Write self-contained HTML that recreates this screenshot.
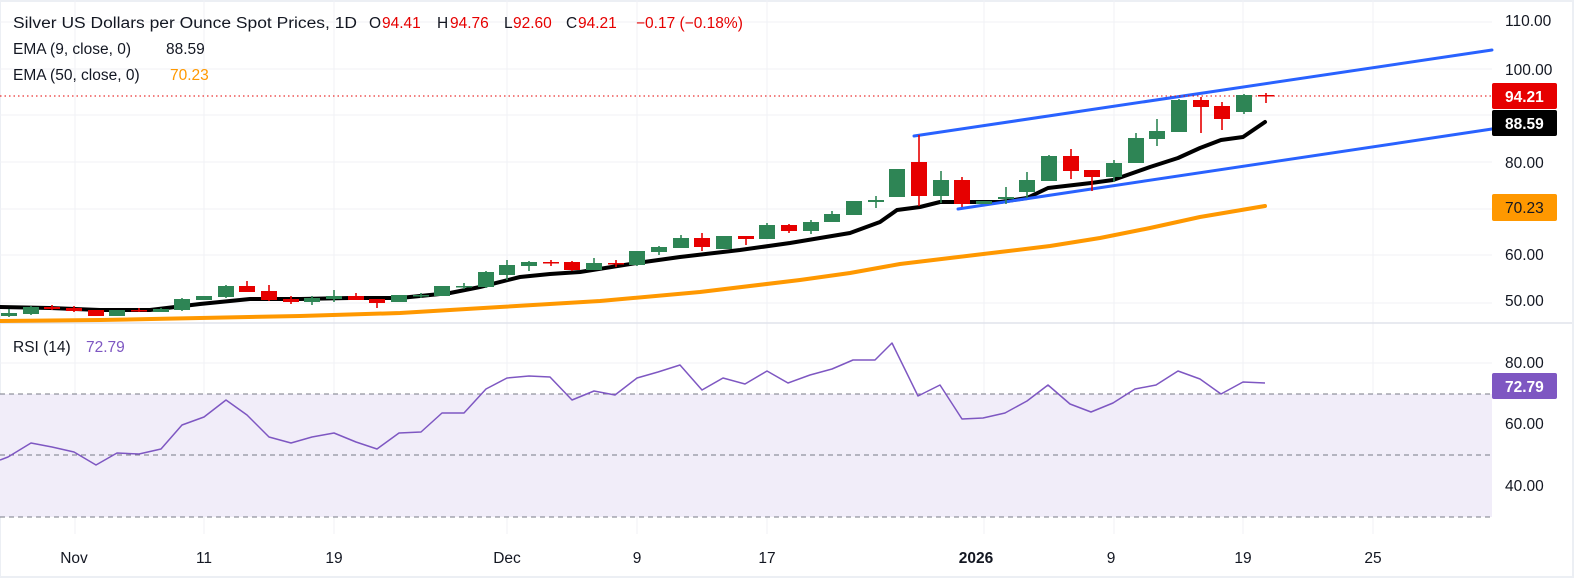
<!DOCTYPE html>
<html><head><meta charset="utf-8"><style>
html,body{margin:0;padding:0;background:#eceff4;}
svg{display:block;font-family:"Liberation Sans",sans-serif;}
</style></head><body>
<svg width="1574" height="578" viewBox="0 0 1574 578" xmlns="http://www.w3.org/2000/svg">
<rect x="1" y="2" width="1571" height="574" fill="#fff"/>
<!-- grid -->
<g stroke="#f0f2f6" stroke-width="1">
<line x1="0" y1="22" x2="1492" y2="22"/><line x1="0" y1="69" x2="1492" y2="69"/><line x1="0" y1="115" x2="1492" y2="115"/>
<line x1="0" y1="162" x2="1492" y2="162"/><line x1="0" y1="209" x2="1492" y2="209"/><line x1="0" y1="255" x2="1492" y2="255"/>
<line x1="0" y1="303" x2="1492" y2="303"/>
<line x1="0" y1="363" x2="1492" y2="363"/><line x1="0" y1="425" x2="1492" y2="425"/><line x1="0" y1="486" x2="1492" y2="486"/>
<line x1="75" y1="0" x2="75" y2="534"/><line x1="204" y1="0" x2="204" y2="534"/><line x1="334" y1="0" x2="334" y2="534"/>
<line x1="507" y1="0" x2="507" y2="534"/><line x1="637" y1="0" x2="637" y2="534"/><line x1="767" y1="0" x2="767" y2="534"/>
<line x1="984" y1="0" x2="984" y2="534"/><line x1="1114" y1="0" x2="1114" y2="534"/><line x1="1243" y1="0" x2="1243" y2="534"/>
<line x1="1373" y1="0" x2="1373" y2="534"/>
</g>
<line x1="0" y1="323" x2="1572" y2="323" stroke="#e0e3eb" stroke-width="1.5"/>
<!-- RSI band -->
<rect x="0" y="394" width="1492" height="123" fill="#f1edf9"/>
<g stroke="#787b86" stroke-width="1" stroke-dasharray="5,4">
<line x1="0" y1="394" x2="1492" y2="394"/><line x1="0" y1="455" x2="1492" y2="455"/><line x1="0" y1="517" x2="1492" y2="517"/>
</g>
<!-- EMA50 -->
<polyline fill="none" stroke="#ff9800" stroke-width="4" stroke-linejoin="round" stroke-linecap="round"
points="0,321 100,320 200,318 300,316 400,313 450,310 500,307 600,301 700,292 800,280 850,273 900,264 950,258 1000,252 1050,246 1100,238 1150,228 1200,217 1265,206"/>
<!-- EMA9 -->
<polyline fill="none" stroke="#000" stroke-width="4" stroke-linejoin="round" stroke-linecap="round"
points="0,307 50,308 100,310 150,310 200,304 250,299 300,299 350,298 400,298 450,293 480,287 520,277 550,274 580,272 637,263 680,257 740,250 790,243 850,233 880,222 897,210 920,207 940,202 1000,202 1027,198 1048,188 1091,183 1113,180 1150,167 1178,158 1200,148 1221,140 1243,137 1265,122"/>
<!-- channel -->
<g stroke="#2962ff" stroke-width="3" stroke-linecap="round">
<line x1="914" y1="136" x2="1492" y2="50"/>
<line x1="958" y1="209" x2="1492" y2="129"/>
</g>
<!-- close line -->
<line x1="0" y1="96" x2="1492" y2="96" stroke="#e60000" stroke-width="1" stroke-dasharray="1.5,3"/>
<!-- candles -->
<g id="c"></g>
<g stroke-width="1.6">
<!-- generated static -->
<line x1="9" y1="309" x2="9" y2="317" stroke="#2e8555"/><rect x="1" y="313" width="16" height="3" fill="#2e8555"/>
<line x1="31" y1="306" x2="31" y2="315" stroke="#2e8555"/><rect x="23" y="307" width="16" height="7" fill="#2e8555"/>
<line x1="52" y1="305" x2="52" y2="310" stroke="#e60000"/><rect x="44" y="307" width="16" height="2" fill="#e60000"/>
<line x1="74" y1="306" x2="74" y2="312" stroke="#e60000"/><rect x="66" y="308" width="16" height="3" fill="#e60000"/>
<line x1="96" y1="310" x2="96" y2="316" stroke="#e60000"/><rect x="88" y="310" width="16" height="6" fill="#e60000"/>
<line x1="117" y1="310" x2="117" y2="316" stroke="#2e8555"/><rect x="109" y="310" width="16" height="6" fill="#2e8555"/>
<line x1="139" y1="308" x2="139" y2="312" stroke="#e60000"/><rect x="131" y="310" width="16" height="1.5" fill="#e60000"/>
<line x1="161" y1="308" x2="161" y2="312" stroke="#2e8555"/><rect x="153" y="309" width="16" height="3" fill="#2e8555"/>
<line x1="182" y1="298" x2="182" y2="311" stroke="#2e8555"/><rect x="174" y="299" width="16" height="11" fill="#2e8555"/>
<line x1="204" y1="296" x2="204" y2="300" stroke="#2e8555"/><rect x="196" y="296" width="16" height="4" fill="#2e8555"/>
<line x1="226" y1="285" x2="226" y2="298" stroke="#2e8555"/><rect x="218" y="286" width="16" height="11" fill="#2e8555"/>
<line x1="247" y1="281" x2="247" y2="292" stroke="#e60000"/><rect x="239" y="286" width="16" height="6" fill="#e60000"/>
<line x1="269" y1="285" x2="269" y2="301" stroke="#e60000"/><rect x="261" y="291" width="16" height="9" fill="#e60000"/>
<line x1="291" y1="296" x2="291" y2="304" stroke="#e60000"/><rect x="283" y="299" width="16" height="3" fill="#e60000"/>
<line x1="312" y1="296" x2="312" y2="305" stroke="#2e8555"/><rect x="304" y="298" width="16" height="4" fill="#2e8555"/>
<line x1="334" y1="290" x2="334" y2="302" stroke="#2e8555"/><rect x="326" y="296" width="16" height="3" fill="#2e8555"/>
<line x1="356" y1="293" x2="356" y2="300" stroke="#e60000"/><rect x="348" y="296" width="16" height="4" fill="#e60000"/>
<line x1="377" y1="299" x2="377" y2="308" stroke="#e60000"/><rect x="369" y="299" width="16" height="4" fill="#e60000"/>
<line x1="399" y1="295" x2="399" y2="302" stroke="#2e8555"/><rect x="391" y="295" width="16" height="7" fill="#2e8555"/>
<line x1="421" y1="293" x2="421" y2="298" stroke="#2e8555"/><rect x="413" y="295" width="16" height="1.5" fill="#2e8555"/>
<line x1="442" y1="286" x2="442" y2="296" stroke="#2e8555"/><rect x="434" y="286" width="16" height="10" fill="#2e8555"/>
<line x1="464" y1="283" x2="464" y2="289" stroke="#2e8555"/><rect x="456" y="286" width="16" height="1.5" fill="#2e8555"/>
<line x1="486" y1="271" x2="486" y2="288" stroke="#2e8555"/><rect x="478" y="272" width="16" height="15" fill="#2e8555"/>
<line x1="507" y1="260" x2="507" y2="280" stroke="#2e8555"/><rect x="499" y="265" width="16" height="10" fill="#2e8555"/>
<line x1="529" y1="261" x2="529" y2="271" stroke="#2e8555"/><rect x="521" y="262" width="16" height="4" fill="#2e8555"/>
<line x1="551" y1="260" x2="551" y2="266" stroke="#e60000"/><rect x="543" y="262" width="16" height="1.5" fill="#e60000"/>
<line x1="572" y1="261" x2="572" y2="271" stroke="#e60000"/><rect x="564" y="262" width="16" height="8" fill="#e60000"/>
<line x1="594" y1="258" x2="594" y2="270" stroke="#2e8555"/><rect x="586" y="263" width="16" height="7" fill="#2e8555"/>
<line x1="616" y1="260" x2="616" y2="267" stroke="#e60000"/><rect x="608" y="263" width="16" height="1.5" fill="#e60000"/>
<line x1="637" y1="251" x2="637" y2="266" stroke="#2e8555"/><rect x="629" y="251" width="16" height="14" fill="#2e8555"/>
<line x1="659" y1="246" x2="659" y2="255" stroke="#2e8555"/><rect x="651" y="247" width="16" height="5" fill="#2e8555"/>
<line x1="681" y1="235" x2="681" y2="248" stroke="#2e8555"/><rect x="673" y="238" width="16" height="10" fill="#2e8555"/>
<line x1="702" y1="233" x2="702" y2="251" stroke="#e60000"/><rect x="694" y="238" width="16" height="9" fill="#e60000"/>
<line x1="724" y1="236" x2="724" y2="249" stroke="#2e8555"/><rect x="716" y="236" width="16" height="13" fill="#2e8555"/>
<line x1="746" y1="236" x2="746" y2="245" stroke="#e60000"/><rect x="738" y="236" width="16" height="3" fill="#e60000"/>
<line x1="767" y1="223" x2="767" y2="239" stroke="#2e8555"/><rect x="759" y="225" width="16" height="14" fill="#2e8555"/>
<line x1="789" y1="224" x2="789" y2="233" stroke="#e60000"/><rect x="781" y="225" width="16" height="6" fill="#e60000"/>
<line x1="811" y1="220" x2="811" y2="234" stroke="#2e8555"/><rect x="803" y="222" width="16" height="9" fill="#2e8555"/>
<line x1="832" y1="211" x2="832" y2="222" stroke="#2e8555"/><rect x="824" y="214" width="16" height="8" fill="#2e8555"/>
<line x1="854" y1="201" x2="854" y2="215" stroke="#2e8555"/><rect x="846" y="201" width="16" height="14" fill="#2e8555"/>
<line x1="876" y1="196" x2="876" y2="208" stroke="#2e8555"/><rect x="868" y="200" width="16" height="2" fill="#2e8555"/>
<line x1="897" y1="169" x2="897" y2="197" stroke="#2e8555"/><rect x="889" y="169" width="16" height="28" fill="#2e8555"/>
<line x1="919" y1="135" x2="919" y2="206" stroke="#e60000"/><rect x="911" y="162" width="16" height="34" fill="#e60000"/>
<line x1="941" y1="171" x2="941" y2="203" stroke="#2e8555"/><rect x="933" y="180" width="16" height="16" fill="#2e8555"/>
<line x1="962" y1="177" x2="962" y2="207" stroke="#e60000"/><rect x="954" y="180" width="16" height="24" fill="#e60000"/>
<line x1="984" y1="201" x2="984" y2="204" stroke="#2e8555"/><rect x="976" y="201" width="16" height="3" fill="#2e8555"/>
<line x1="1006" y1="187" x2="1006" y2="204" stroke="#2e8555"/><rect x="998" y="197" width="16" height="2" fill="#2e8555"/>
<line x1="1027" y1="172" x2="1027" y2="198" stroke="#2e8555"/><rect x="1019" y="180" width="16" height="12" fill="#2e8555"/>
<line x1="1049" y1="155" x2="1049" y2="181" stroke="#2e8555"/><rect x="1041" y="156" width="16" height="25" fill="#2e8555"/>
<line x1="1071" y1="149" x2="1071" y2="179" stroke="#e60000"/><rect x="1063" y="156" width="16" height="15" fill="#e60000"/>
<line x1="1092" y1="170" x2="1092" y2="191" stroke="#e60000"/><rect x="1084" y="170" width="16" height="7" fill="#e60000"/>
<line x1="1114" y1="160" x2="1114" y2="182" stroke="#2e8555"/><rect x="1106" y="163" width="16" height="14" fill="#2e8555"/>
<line x1="1136" y1="133" x2="1136" y2="163" stroke="#2e8555"/><rect x="1128" y="138" width="16" height="25" fill="#2e8555"/>
<line x1="1157" y1="119" x2="1157" y2="146" stroke="#2e8555"/><rect x="1149" y="131" width="16" height="8" fill="#2e8555"/>
<line x1="1179" y1="99" x2="1179" y2="132" stroke="#2e8555"/><rect x="1171" y="100" width="16" height="32" fill="#2e8555"/>
<line x1="1201" y1="97" x2="1201" y2="133" stroke="#e60000"/><rect x="1193" y="100" width="16" height="7" fill="#e60000"/>
<line x1="1222" y1="102" x2="1222" y2="130" stroke="#e60000"/><rect x="1214" y="106" width="16" height="13" fill="#e60000"/>
<line x1="1244" y1="94" x2="1244" y2="114" stroke="#2e8555"/><rect x="1236" y="95" width="16" height="17" fill="#2e8555"/>
<line x1="1266" y1="93" x2="1266" y2="103" stroke="#e60000"/><rect x="1258" y="95" width="16" height="1.5" fill="#e60000"/>
</g>
<!-- RSI line -->
<polyline fill="none" stroke="#7e57c2" stroke-width="1.5" stroke-linejoin="round"
points="0,460 8,457 31,443 52,447 74,452 96,465 117,453 139,454 161,449 182,425 204,417 226,400 247,415 269,437 291,443 312,437 334,433 356,442 377,449 399,433 421,432 442,413 464,413 486,389 507,378 529,376 550,377 572,400 594,391 615,395 637,378 658,372 680,365 702,390 723,378 745,384 767,371 788,383 810,375 832,369 853,360 875,360 892,343 918,396 940,385 962,419 983,418 1005,413 1027,401 1048,385 1070,404 1091,412 1113,403 1135,389 1156,385 1178,371 1200,379 1221,394 1243,382 1265,383"/>
<!-- header -->
<g font-size="15.5" fill="#131722">
<text x="13" y="28" textLength="344" lengthAdjust="spacingAndGlyphs">Silver US Dollars per Ounce Spot Prices, 1D</text>
<text x="369" y="28">O</text><text x="382" y="28" fill="#e60000">94.41</text>
<text x="437" y="28">H</text><text x="450" y="28" fill="#e60000">94.76</text>
<text x="504" y="28">L</text><text x="513" y="28" fill="#e60000">92.60</text>
<text x="566" y="28">C</text><text x="578" y="28" fill="#e60000">94.21</text>
<text x="636" y="28" fill="#e60000">−0.17 (−0.18%)</text>
<text x="13" y="54">EMA (9, close, 0)</text><text x="166" y="54">88.59</text>
<text x="13" y="80">EMA (50, close, 0)</text><text x="170" y="80" fill="#ff9800">70.23</text>
<text x="13" y="352">RSI (14)</text><text x="86" y="352" fill="#7e57c2">72.79</text>
</g>
<!-- price axis -->
<g font-size="15.5" fill="#131722">
<text x="1505" y="26">110.00</text>
<text x="1505" y="75">100.00</text>
<text x="1505" y="168">80.00</text>
<text x="1505" y="260">60.00</text>
<text x="1505" y="306">50.00</text>
<text x="1505" y="368">80.00</text>
<text x="1505" y="429">60.00</text>
<text x="1505" y="491">40.00</text>
</g>
<rect x="1492" y="83" width="65" height="26" rx="2" fill="#e60000"/>
<rect x="1492" y="110" width="65" height="26" rx="2" fill="#000"/>
<rect x="1492" y="194" width="65" height="27" rx="2" fill="#ff9800"/>
<rect x="1492" y="373" width="65" height="26" rx="2" fill="#7e57c2"/>
<g font-size="15.5" font-weight="bold">
<text x="1505" y="102" fill="#fff">94.21</text>
<text x="1505" y="129" fill="#fff">88.59</text>
<text x="1505" y="213" fill="#131722" font-weight="normal">70.23</text>
<text x="1505" y="392" fill="#fff">72.79</text>
</g>
<!-- time axis -->
<g font-size="15.5" fill="#131722" text-anchor="middle">
<text x="74" y="563">Nov</text>
<text x="204" y="563">11</text>
<text x="334" y="563">19</text>
<text x="507" y="563">Dec</text>
<text x="637" y="563">9</text>
<text x="767" y="563">17</text>
<text x="976" y="563" font-weight="bold">2026</text>
<text x="1111" y="563">9</text>
<text x="1243" y="563">19</text>
<text x="1373" y="563">25</text>
</g>
</svg>
</body></html>
